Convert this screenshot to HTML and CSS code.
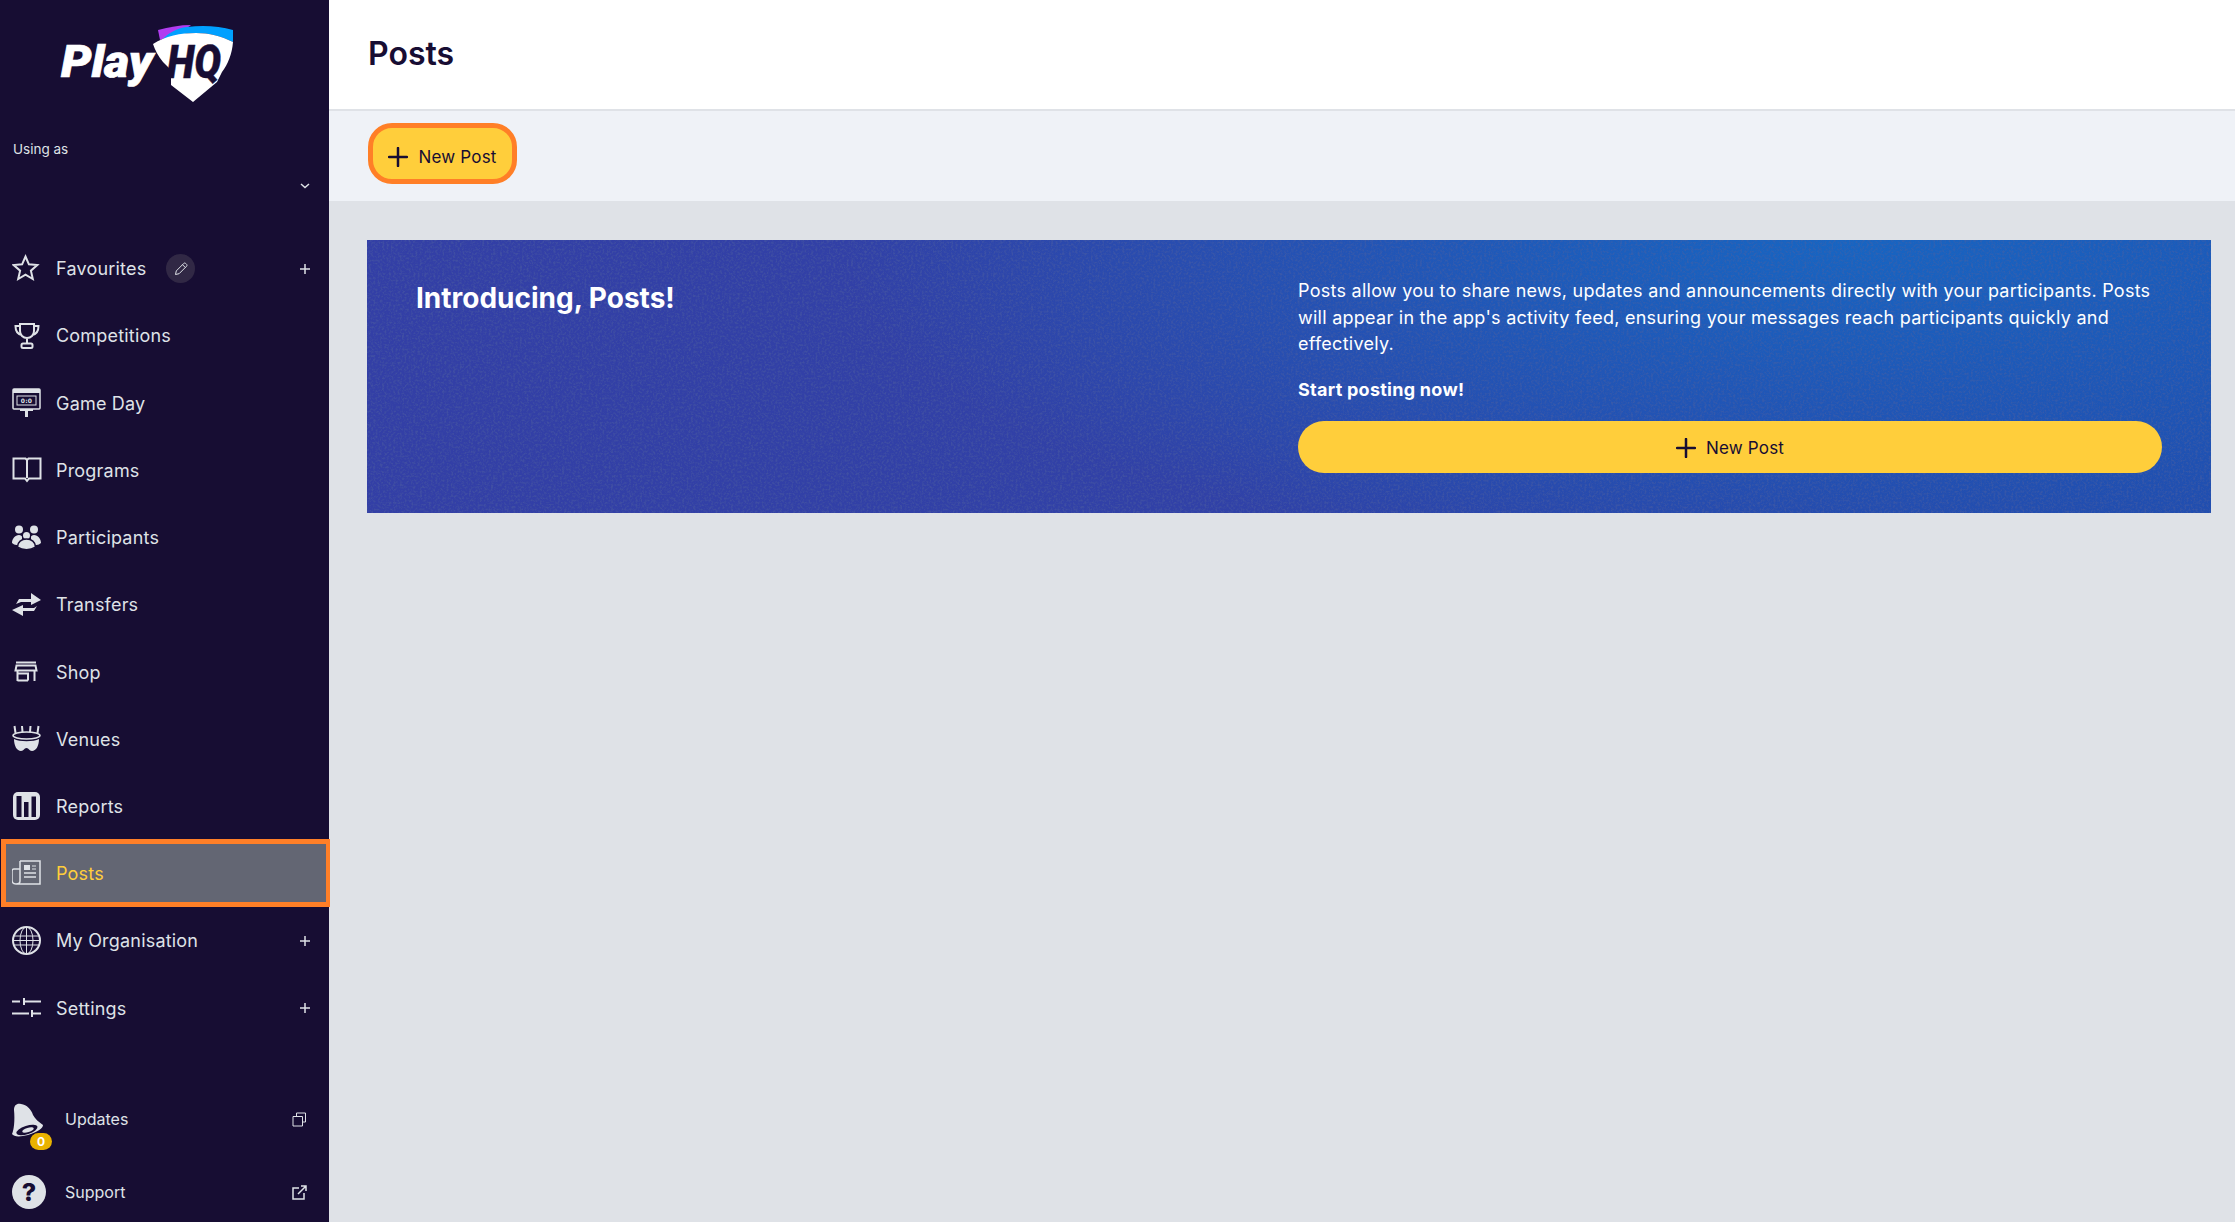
FILE: index.html
```html
<!DOCTYPE html>
<html>
<head>
    <meta charset="utf-8">
    <title>Posts</title>
    <link rel="stylesheet" href="styles.css">
</head>
<body>
<div class="app">
    <aside class="sidebar">
        <div class="logo">
            <svg width="190" height="90" viewBox="50 20 190 90">
                <path d="M158 30c11-3 22-5 33-5l-8 6-23 9z" fill="#b13cf0"/>
                <path d="M161 41c7-8 16-13 26-14 16-2 32-1 46 3v12c-12-6-24-9-37-9-12 0-24 3-35 8z" fill="#00a0ff"/>
                <path d="M153 44c12-8 28-11 43-11 13 0 25 3 37 9-1 12-5 22-11 30l-5 10-24 20-22-17V70l-8-8c-5-6-8-12-10-18z" fill="#fff"/>
                <text x="61" y="77" textLength="92" lengthAdjust="spacingAndGlyphs" class="logo-play">Play</text>
                <text x="167" y="78" textLength="54" lengthAdjust="spacingAndGlyphs" class="logo-hq">HQ</text>
            </svg>
        </div>
        <div class="using">
            <div class="using-label">Using as</div>
            <div class="using-select">
                <svg width="10" height="6" viewBox="0 0 10 6"><path d="M1 1l4 3.5L9 1" class="line"/></svg>
            </div>
        </div>
        <nav class="nav">
            <a class="nav-item">
                <svg class="icon" viewBox="0 0 30 30"><path d="M13.500 2.500l3.400 7.800 8.400.8-6.400 5.600 1.900 8.300-7.300-4.400-7.300 4.400 1.900-8.300-6.400-5.600 8.400-.8z" class="line thick"/></svg>
                <span>Favourites</span>
                <span class="edit">
                    <svg width="16" height="16" viewBox="0 0 16 16"><path d="M2.500 13.500l.8-3.600 7.500-7.500c.5-.5 1.300-.5 1.800 0l1 1c.5.5.5 1.300 0 1.800l-7.500 7.500zM9.500 3.700l2.800 2.800" class="line thin"/></svg>
                </span>
                <svg class="plus" width="10" height="10" viewBox="0 0 10 10"><path d="M5 0v10M0 5h10" class="line"/></svg>
            </a>
            <a class="nav-item">
                <svg class="icon" viewBox="0 0 30 30"><path d="M8 3h14v7c0 4-3 7-7 7s-7-3-7-7zM8 5H3.500c0 5 2 8 6 9M22 5h4.500c0 5-2 8-6 9M15 17v5" class="line thick"/><rect x="9.500" y="22.500" width="11" height="4.500" rx="1.500" class="line thick"/></svg>
                <span>Competitions</span>
            </a>
            <a class="nav-item">
                <svg class="icon" viewBox="0 0 30 30"><rect x="1" y="1" width="27" height="20" rx="1" class="line"/><rect x="1" y="1" width="27" height="4" class="solid"/><rect x="5" y="8" width="19" height="9" class="line thin"/><text x="14.500" y="15" class="score">0:0</text><rect x="13" y="21" width="3" height="8" class="solid"/><rect x="8" y="21" width="13" height="2" class="solid"/></svg>
                <span>Game Day</span>
            </a>
            <a class="nav-item">
                <svg class="icon" viewBox="0 0 30 30"><path d="M1.500 3.500h12l1.500 1.500 1.500-1.500h12v20H17l-2 2.500-2-2.500H1.500zM15 5v18" class="line thick"/></svg>
                <span>Programs</span>
            </a>
            <a class="nav-item">
                <svg class="icon" viewBox="0 0 30 30"><circle cx="7" cy="6.500" r="4" class="solid"/><circle cx="22" cy="6.500" r="4" class="solid"/><circle cx="14.500" cy="12.500" r="3.500" class="solid"/><path d="M0 20c0-4 3-8 7-8 2 0 3 1 3 2 0 3 0 4-1 6-2 2-6 3-9 0zM29 20c0-4-3-8-7-8-2 0-3 1-3 2 0 3 0 4 1 6 2 2 6 3 9 0z" class="solid"/><path d="M5.500 24c0-5 4-8 9-8s9 3 9 8c-5 3.500-13 3.500-18 0z" class="solid outlined"/></svg>
                <span>Participants</span>
            </a>
            <a class="nav-item">
                <svg class="icon" viewBox="0 0 30 30"><path d="M4 14l3-5h12V3l10 7-10 5v-3H9zM25 16l-3 5H11v5L0 20l11-5v3h11z" class="solid"/></svg>
                <span>Transfers</span>
            </a>
            <a class="nav-item">
                <svg class="icon" viewBox="0 0 30 30"><path d="M4 5.500h20M4.500 8.500h19l1 5h-21zM5.500 13.500v10.500M22.500 13.500v10.500M5.500 23.500h10.500M16 15.500v8M5.500 16.500h10.500" class="line thick"/></svg>
                <span>Shop</span>
            </a>
            <a class="nav-item">
                <svg class="icon" viewBox="0 0 30 30"><path d="M2 15c5 3 20 3 25 0 0 7-3 12-7 12-3 0-3-3-5.500-3s-2.500 3-5.500 3c-4 0-7-5-7-12z" class="solid"/><ellipse cx="14.500" cy="11.500" rx="13.500" ry="3.500" class="line"/><path d="M2.500 2l1 7M10 2l.5 6M18.500 2l-.5 6M26.500 2l-1 7" class="line thick"/></svg>
                <span>Venues</span>
            </a>
            <a class="nav-item">
                <svg class="icon" viewBox="0 0 30 30"><rect x="1" y="0" width="27" height="28" rx="5" class="solid"/><path d="M4.500 4h5v21h-5zM12 10h4.500v15H12zM19.500 4.500H24V25h-4.500z" class="dark"/></svg>
                <span>Reports</span>
            </a>
            <a class="nav-item active">
                <svg class="icon" viewBox="0 0 30 30"><path d="M8 3h20v23H4c-2 0-4-1-4-4v-9c0-1 1-2 2-2h6M8 3v20c0 2-2 3-4 3" class="line"/><rect x="12" y="7" width="6" height="5" class="solid"/><path d="M12 15h12M12 19h12" class="line"/><path d="M20 8h4M20 11h4" class="line thin"/></svg>
                <span>Posts</span>
            </a>
            <a class="nav-item">
                <svg class="icon" viewBox="0 0 30 30"><circle cx="14.500" cy="14.500" r="13.500" class="line thick"/><ellipse cx="14.500" cy="14.500" rx="6.500" ry="13.500" class="line thin"/><path d="M14.500 1v27M2 10h25M1 14.500h27M2 19h25" class="line thin"/></svg>
                <span>My Organisation</span>
                <svg class="plus" width="10" height="10" viewBox="0 0 10 10"><path d="M5 0v10M0 5h10" class="line"/></svg>
            </a>
            <a class="nav-item">
                <svg class="icon" viewBox="0 0 30 30"><path d="M0 8.500h8M13 8.500h16M21 20.500h8M0 20.500h17" class="line thick"/><path d="M12 5v7M20 17v7" class="line thick"/></svg>
                <span>Settings</span>
                <svg class="plus" width="10" height="10" viewBox="0 0 10 10"><path d="M5 0v10M0 5h10" class="line"/></svg>
            </a>
        </nav>
        <div class="side-foot">
            <a class="foot-item">
                <span class="foot-icon">
                    <svg width="34" height="38" viewBox="0 0 34 38"><path d="M2 10C2 5 5 3 9 4c6 1 10 5 12 11 2 4 6 7 10 10 0 3-5 7-15 10-8 2-14 2-16-1 2-4 3-14 2-24z" class="solid"/><ellipse cx="15" cy="30" rx="11" ry="4.200" transform="rotate(-18 15 30)" class="dark"/><ellipse cx="16" cy="30" rx="6" ry="2.200" transform="rotate(-18 16 30)" class="solid"/></svg>
                    <span class="badge">0</span>
                </span>
                <span>Updates</span>
                <svg class="ext" width="15" height="15" viewBox="0 0 15 15"><path d="M4.500 4.500V1h9v9h-3M1 4.500h9.500V14H1z" class="line thin"/></svg>
            </a>
            <a class="foot-item">
                <span class="foot-icon"><span class="help">?</span></span>
                <span>Support</span>
                <svg class="ext" width="15" height="15" viewBox="0 0 15 15"><path d="M7 3H1v11h11V8M6 9l8-8M9 1h5v5" class="line"/></svg>
            </a>
        </div>
    </aside>
    <main class="main">
        <header class="page-head">
            <h1>Posts</h1>
        </header>
        <div class="toolbar">
            <button class="btn btn-focus">
                <svg width="20" height="20" viewBox="0 0 20 20"><path d="M10 1v18M1 10h18"/></svg>
                New Post
            </button>
        </div>
        <section class="content">
            <div class="banner">
                <svg class="grain" width="100%" height="100%">
                    <filter id="noise">
                        <feTurbulence type="fractalNoise" baseFrequency="0.45" numOctaves="3" seed="4"/>
                        <feColorMatrix values="0 0 0 0 0.08  0 0 0 0 0.12  0 0 0 0 0.35  0 0 0 3 -1.3"/>
                    </filter>
                    <rect width="100%" height="100%" filter="url(#noise)"/>
                </svg>
                <h2>Introducing, Posts!</h2>
                <div class="banner-body">
                    <p>Posts allow you to share news, updates and announcements directly with your participants. Posts will appear in the app's activity feed, ensuring your messages reach participants quickly and effectively.</p>
                    <p class="strong">Start posting now!</p>
                    <button class="btn btn-wide">
                        <svg width="20" height="20" viewBox="0 0 20 20"><path d="M10 1v18M1 10h18"/></svg>
                        New Post
                    </button>
                </div>
            </div>
        </section>
    </main>
</div>
</body>
</html>
```
FILE: styles.css
```css
* {
    box-sizing: border-box;
}
body {
    margin: 0;
    font-family: "Inter", "Liberation Sans", sans-serif;
    color: #170d33;
    background: #dfe2e7;
}
.app {
    display: flex;
    height: 100vh;
    overflow: hidden;
}

/* svg paint helpers */
.line {
    fill: none;
    stroke: #dfe2e7;
    stroke-width: 1.5;
}
.thick {
    stroke-width: 2;
}
.thin {
    stroke-width: 1;
}
.solid {
    fill: #dfe2e7;
}
.outlined {
    stroke: #170d33;
    stroke-width: 1.5;
}
.dark {
    fill: #170d33;
}
.score {
    font-family: "DejaVu Sans", sans-serif;
    font-size: 6px;
    font-weight: bold;
    fill: #dfe2e7;
    text-anchor: middle;
}

/* sidebar */
.sidebar {
    width: 329px;
    flex: none;
    display: flex;
    flex-direction: column;
    background: #170d33;
    color: #dfe2e7;
}
.logo {
    height: 120px;
    padding: 20px 0 0 50px;
}
.logo svg {
    display: block;
}
.logo-play {
    font-family: "Roboto", sans-serif;
    font-size: 44px;
    font-weight: 900;
    font-style: italic;
    fill: #fff;
    stroke: #fff;
    stroke-width: 0.7;
}
.logo-hq {
    font-family: "Roboto", sans-serif;
    font-size: 46px;
    font-weight: 900;
    font-style: italic;
    fill: #170d33;
    stroke: #170d33;
    stroke-width: 0.5;
}
.using {
    height: 115px;
    padding: 21px 17px 0 13px;
}
.using-label {
    font-size: 13.5px;
    line-height: 17px;
}
.using-select {
    display: flex;
    justify-content: flex-end;
    margin-top: 25px;
    padding-right: 2px;
}
.using-select svg {
    display: block;
}
.nav-item {
    display: flex;
    align-items: center;
    gap: 14px;
    height: 67.25px;
    padding: 0 19px 0 12px;
    font-size: 18px;
    letter-spacing: 0.2px;
}
.nav-item.active {
    height: 68px;
    margin: -1px -1px 0 1px;
    color: #ffce3b;
    background: #636673;
    border: 5px solid #ff7f27;
    border-right-width: 4px;
    padding-left: 6px;
}
.icon {
    width: 30px;
    height: 30px;
    flex: none;
}
.edit {
    display: flex;
    align-items: center;
    justify-content: center;
    width: 29px;
    height: 29px;
    margin-left: 6px;
    border-radius: 50%;
    background: #312845;
}
.plus {
    margin-left: auto;
}
.side-foot {
    display: flex;
    flex-direction: column;
    gap: 23px;
    margin-top: auto;
    padding-bottom: 5px;
}
.foot-item {
    display: flex;
    align-items: center;
    height: 50px;
    padding: 0 22px 0 12px;
    font-size: 16px;
}
.foot-icon {
    position: relative;
    width: 53px;
    flex: none;
}
.foot-icon svg {
    display: block;
}
.badge {
    position: absolute;
    left: 18px;
    top: 33px;
    width: 22px;
    height: 17px;
    border-radius: 9px;
    background: #e9b200;
    color: #fff;
    font-size: 12px;
    font-weight: 700;
    line-height: 17px;
    text-align: center;
}
.help {
    display: block;
    width: 34px;
    height: 34px;
    border-radius: 50%;
    background: #dfe2e7;
    color: #170d33;
    font-size: 25px;
    font-weight: 800;
    line-height: 34px;
    text-align: center;
}
.ext {
    margin-left: auto;
}

/* main area */
.main {
    flex: 1;
    min-width: 0;
    display: flex;
    flex-direction: column;
}
.page-head {
    height: 111px;
    padding: 0 39px 2px;
    display: flex;
    align-items: center;
    background: #fff;
    border-bottom: 2px solid #dfe2e7;
}
h1 {
    margin: 0;
    font-size: 32px;
    font-weight: 600;
    color: #170d33;
}
.toolbar {
    height: 90px;
    padding: 12px 39px;
    background: #eff2f7;
}
.btn {
    display: flex;
    align-items: center;
    justify-content: center;
    gap: 10px;
    border: 0;
    background: #ffce3b;
    color: #170d33;
    font-family: inherit;
    font-size: 17px;
    letter-spacing: 0.2px;
}
.btn svg {
    stroke: #170d33;
    stroke-width: 2.5;
    stroke-linecap: round;
}
.btn-focus {
    width: 149px;
    height: 61px;
    padding-top: 8px;
    border: 5px solid #ff7f27;
    border-radius: 24px;
}
.content {
    flex: 1;
    padding: 39px 24px 0 38px;
}
.banner {
    position: relative;
    display: grid;
    grid-template-columns: 1fr 864px;
    height: 273px;
    padding: 38px 49px 40px;
    color: #fff;
    background:
        radial-gradient(ellipse 1000px 330px at 80% 0, #1765c2 0, rgba(23, 101, 194, 0) 100%),
        linear-gradient(90deg, #333fa6 0, #3141a7 45%, #224bad 100%);
    overflow: hidden;
}
.grain {
    position: absolute;
    left: 0;
    top: 0;
    opacity: 0.45;
}
h2 {
    position: relative;
    margin: 0;
    font-size: 28px;
    font-weight: 700;
    line-height: 40px;
}
.banner-body {
    position: relative;
}
.banner-body p {
    margin: 0;
    font-size: 18px;
    line-height: 26.5px;
    letter-spacing: 0.26px;
}
.banner-body .strong {
    margin-top: 19px;
    font-weight: 700;
}
.btn-wide {
    width: 100%;
    height: 52px;
    margin-top: 18px;
    padding-top: 2px;
    border-radius: 26px;
}
```
